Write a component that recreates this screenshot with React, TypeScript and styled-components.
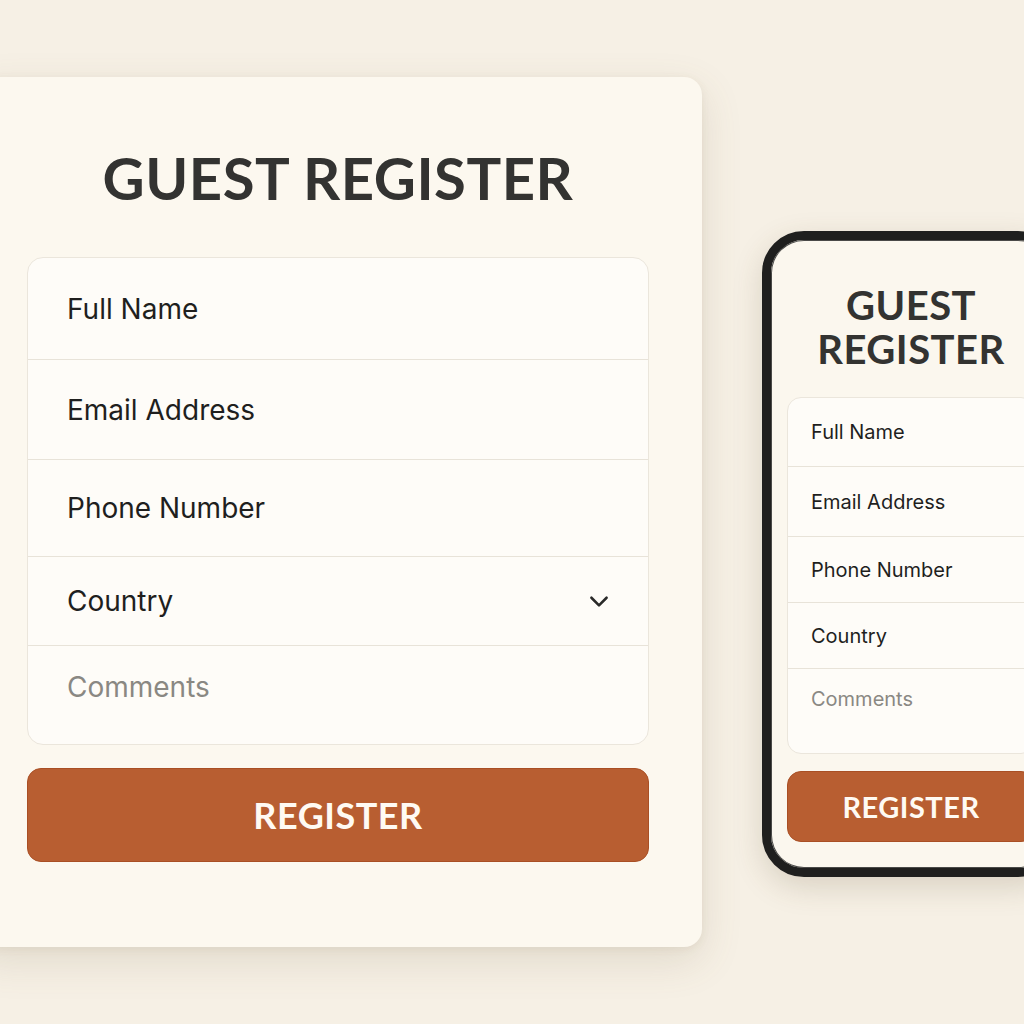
import React from "react";
import styled, { createGlobalStyle } from "styled-components";

const Global = createGlobalStyle`
  html, body { margin: 0; padding: 0; overflow: hidden; }
  body {
    background: #f6f0e5;
    width: 1024px;
    height: 1024px;
    font-family: Inter, "Liberation Sans", sans-serif;
  }
`;

const Page = styled.div`
  display: flex;
  align-items: flex-start;
  gap: 60px;
  padding-top: 77px;
  margin-left: -26px;
  width: 1200px;
`;

const Card = styled.div`
  flex: 0 0 auto;
  width: 728px;
  height: 870px;
  box-sizing: border-box;
  padding: 0 53px;
  background: #fcf8ef;
  border-radius: 18px;
  box-shadow: 0 14px 40px rgba(120, 100, 70, 0.16), 0 2px 8px rgba(120, 100, 70, 0.08);
  display: flex;
  flex-direction: column;
`;

const Title = styled.h1<{ $size: number; $lh: number; $mt: number; $mb: number }>`
  margin: ${(p) => p.$mt}px 0 ${(p) => p.$mb}px;
  text-align: center;
  font-family: Lato, "Liberation Sans", sans-serif;
  font-weight: 700;
  font-size: ${(p) => p.$size}px;
  line-height: ${(p) => p.$lh}px;
  color: #333331;
  letter-spacing: 0.5px;
`;

const TitleLine = styled.span`
  display: block;
`;

const FormBox = styled.div<{ $radius: number }>`
  background: #fefcf8;
  border: 1px solid #ebe6dc;
  border-radius: ${(p) => p.$radius}px;
  display: flex;
  flex-direction: column;
  overflow: hidden;
`;

const Row = styled.div<{ $h: number; $pad: number; $size: number; $muted?: boolean; $top?: number }>`
  height: ${(p) => p.$h}px;
  box-sizing: border-box;
  display: flex;
  align-items: ${(p) => (p.$top !== undefined ? "flex-start" : "center")};
  justify-content: space-between;
  padding: ${(p) => (p.$top !== undefined ? `${p.$top}px` : "0")} ${(p) => p.$pad}px 0;
  font-size: ${(p) => p.$size}px;
  color: ${(p) => (p.$muted ? "#8a8883" : "#1f1f1e")};
  border-top: 1px solid #e8e3d9;
  &:first-child { border-top: none; }
`;

const Chevron = styled.svg`
  width: 26px;
  height: 26px;
  margin-right: -3px;
`;

const Button = styled.button<{ $h: number; $size: number; $mt: number }>`
  margin-top: ${(p) => p.$mt}px;
  height: ${(p) => p.$h}px;
  width: 100%;
  border: 1px solid #a94f24;
  border-radius: 14px;
  background: #b85e31;
  color: #fffaf3;
  font-family: Lato, "Liberation Sans", sans-serif;
  font-weight: 700;
  font-size: ${(p) => p.$size}px;
  letter-spacing: 0.5px;
  padding: 0;
`;

const Phone = styled.div`
  flex: 0 0 auto;
  margin-top: 154px;
  width: 298px;
  height: 646px;
  box-sizing: border-box;
  border: 9px solid #1f1f1e;
  border-radius: 42px;
  background: #fbf7ee;
  box-shadow: 0 10px 30px rgba(90, 70, 40, 0.18), inset 0 0 0 1px #4a4a48;
  padding: 0 16px;
  display: flex;
  flex-direction: column;
`;

const fields = ["Full Name", "Email Address", "Phone Number", "Country"];
const bigHeights = [101, 100, 97, 89];
const smallHeights = [68, 70, 66, 66];

export default function App() {
  return (
    <>
      <Global />
      <Page>
        <Card>
          <Title $size={58} $lh={70} $mt={66} $mb={44}>GUEST REGISTER</Title>
          <FormBox $radius={16}>
            {fields.map((f, i) => (
              <Row key={f} $h={bigHeights[i]} $pad={39} $size={28}>
                <span>{f}</span>
                {f === "Country" && (
                  <Chevron viewBox="0 0 24 24" fill="none" stroke="#2a2a29" strokeWidth="2.4" strokeLinecap="round" strokeLinejoin="round">
                    <path d="M5 9l7 7 7-7" />
                  </Chevron>
                )}
              </Row>
            ))}
            <Row $h={99} $pad={39} $size={28} $muted $top={24}>
              <span>Comments</span>
            </Row>
          </FormBox>
          <Button $h={94} $size={36} $mt={23}>REGISTER</Button>
        </Card>
        <Phone>
          <Title $size={40} $lh={44} $mt={43} $mb={26}>
            <TitleLine>GUEST</TitleLine>
            <TitleLine>REGISTER</TitleLine>
          </Title>
          <FormBox $radius={14}>
            {fields.map((f, i) => (
              <Row key={f} $h={smallHeights[i]} $pad={23} $size={20}>
                <span>{f}</span>
              </Row>
            ))}
            <Row $h={85} $pad={23} $size={20} $muted $top={18}>
              <span>Comments</span>
            </Row>
          </FormBox>
          <Button $h={71} $size={29} $mt={17}>REGISTER</Button>
        </Phone>
      </Page>
    </>
  );
}
